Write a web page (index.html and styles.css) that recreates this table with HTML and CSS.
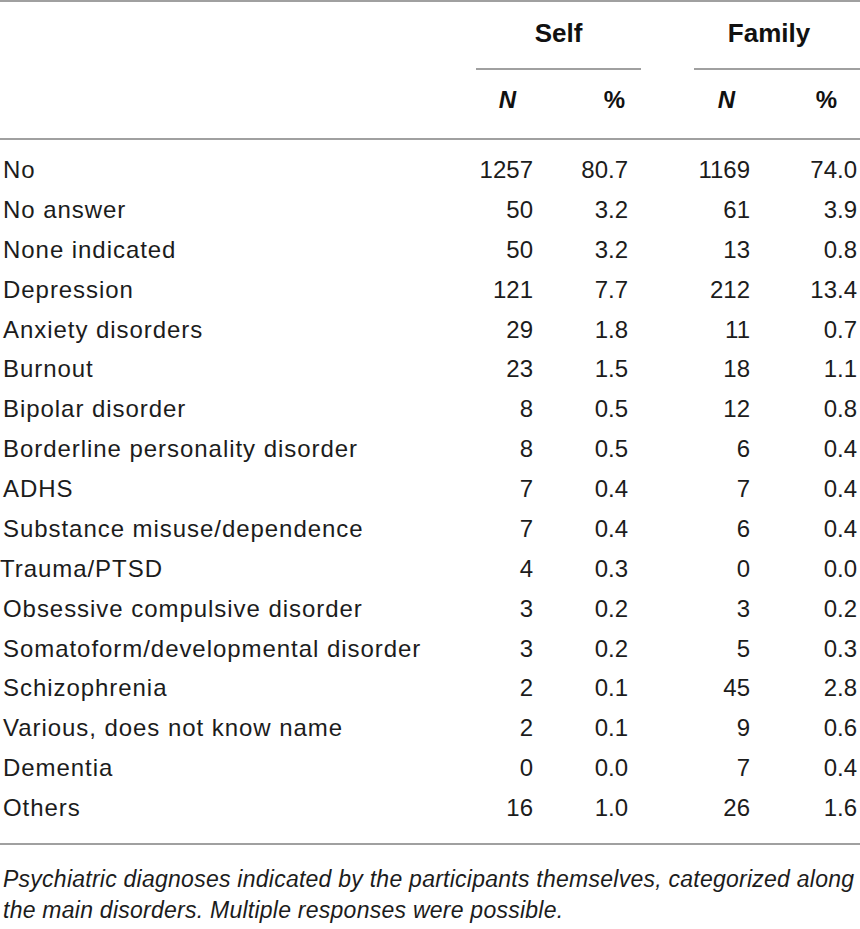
FILE: index.html
```html
<!DOCTYPE html>
<html lang="en">
<head>
<meta charset="utf-8">
<title>Psychiatric diagnoses</title>
<link rel="stylesheet" href="styles.css">
</head>
<body>
<table class="data">
  <colgroup>
    <col class="c-label">
    <col class="c-sn">
    <col class="c-sp">
    <col class="c-gap">
    <col class="c-fn">
    <col class="c-fp">
  </colgroup>
  <thead>
    <tr class="group-row">
      <th></th>
      <th colspan="2" class="group g-self">Self</th>
      <th></th>
      <th colspan="2" class="group g-fam">Family</th>
    </tr>
    <tr class="sub-row">
      <th></th>
      <th class="h-sn"><i>N</i></th>
      <th class="h-sp">%</th>
      <th></th>
      <th class="h-fn"><i>N</i></th>
      <th class="h-fp">%</th>
    </tr>
  </thead>
  <tbody>
    <tr><td>No</td><td>1257</td><td>80.7</td><td></td><td>1169</td><td>74.0</td></tr>
    <tr><td>No answer</td><td>50</td><td>3.2</td><td></td><td>61</td><td>3.9</td></tr>
    <tr><td>None indicated</td><td>50</td><td>3.2</td><td></td><td>13</td><td>0.8</td></tr>
    <tr><td>Depression</td><td>121</td><td>7.7</td><td></td><td>212</td><td>13.4</td></tr>
    <tr><td>Anxiety disorders</td><td>29</td><td>1.8</td><td></td><td>11</td><td>0.7</td></tr>
    <tr><td>Burnout</td><td>23</td><td>1.5</td><td></td><td>18</td><td>1.1</td></tr>
    <tr><td>Bipolar disorder</td><td>8</td><td>0.5</td><td></td><td>12</td><td>0.8</td></tr>
    <tr><td>Borderline personality disorder</td><td>8</td><td>0.5</td><td></td><td>6</td><td>0.4</td></tr>
    <tr><td>ADHS</td><td>7</td><td>0.4</td><td></td><td>7</td><td>0.4</td></tr>
    <tr><td>Substance misuse/dependence</td><td>7</td><td>0.4</td><td></td><td>6</td><td>0.4</td></tr>
    <tr><td class="tight">Trauma/PTSD</td><td>4</td><td>0.3</td><td></td><td>0</td><td>0.0</td></tr>
    <tr><td>Obsessive compulsive disorder</td><td>3</td><td>0.2</td><td></td><td>3</td><td>0.2</td></tr>
    <tr><td>Somatoform/developmental disorder</td><td>3</td><td>0.2</td><td></td><td>5</td><td>0.3</td></tr>
    <tr><td>Schizophrenia</td><td>2</td><td>0.1</td><td></td><td>45</td><td>2.8</td></tr>
    <tr><td>Various, does not know name</td><td>2</td><td>0.1</td><td></td><td>9</td><td>0.6</td></tr>
    <tr><td>Dementia</td><td>0</td><td>0.0</td><td></td><td>7</td><td>0.4</td></tr>
    <tr><td>Others</td><td>16</td><td>1.0</td><td></td><td>26</td><td>1.6</td></tr>
  </tbody>
</table>
<p class="note">Psychiatric diagnoses indicated by the participants themselves, categorized along<br>the main disorders. Multiple responses were possible.</p>
</body>
</html>
```

FILE: styles.css
```css
html, body {
  margin: 0;
  padding: 0;
  background: #ffffff;
}

body {
  width: 860px;
  font-family: "Liberation Sans", Arial, sans-serif;
  color: #1c1c1c;
}

.data {
  width: 860px;
  border-collapse: collapse;
  table-layout: fixed;
  border-top: 2px solid #a0a0a0;
  border-bottom: 2px solid #a0a0a0;
  font-size: 24px;
}

.c-label { width: 476px; }
.c-sn { width: 84px; }
.c-sp { width: 81px; }
.c-gap { width: 53px; }
.c-fn { width: 81px; }
.c-fp { width: 85px; }

th, td {
  padding: 0;
  white-space: nowrap;
}

.group-row th {
  height: 68px;
  vertical-align: middle;
  font-size: 26px;
  font-weight: bold;
  color: #111;
  text-align: center;
  padding-bottom: 4px;
  box-sizing: border-box;
}

.group-row th.group {
  border-bottom: 2px solid #a0a0a0;
}

.group-row th.g-fam {
  padding-right: 16px;
}

.sub-row th {
  height: 70px;
  border-bottom: 2px solid #a0a0a0;
  font-size: 24px;
  font-weight: bold;
  color: #111;
  text-align: right;
  padding-bottom: 8px;
  box-sizing: border-box;
}

.sub-row i {
  font-style: italic;
}

.h-sn { padding-right: 44px !important; }
.h-sp { padding-right: 16px !important; }
.h-fn { padding-right: 40px !important; }
.h-fp { padding-right: 23px !important; }

tbody td {
  line-height: 39.875px;
  text-align: right;
}

tbody td:first-child {
  text-align: left;
  padding-left: 3px;
  letter-spacing: 0.95px;
}

tbody td.tight {
  padding-left: 0;
}

tbody td:nth-child(2) { padding-right: 27px; }
tbody td:nth-child(3) { padding-right: 13px; }
tbody td:nth-child(5) { padding-right: 25px; }
tbody td:nth-child(6) { padding-right: 3px; }

tbody tr:first-child td { padding-top: 10px; }
tbody tr:last-child td { padding-bottom: 15px; }

.note {
  margin: 19px 0 0 3px;
  font-size: 23px;
  font-style: italic;
  letter-spacing: 0.25px;
  line-height: 31px;
  white-space: nowrap;
  color: #1c1c1c;
}
```
